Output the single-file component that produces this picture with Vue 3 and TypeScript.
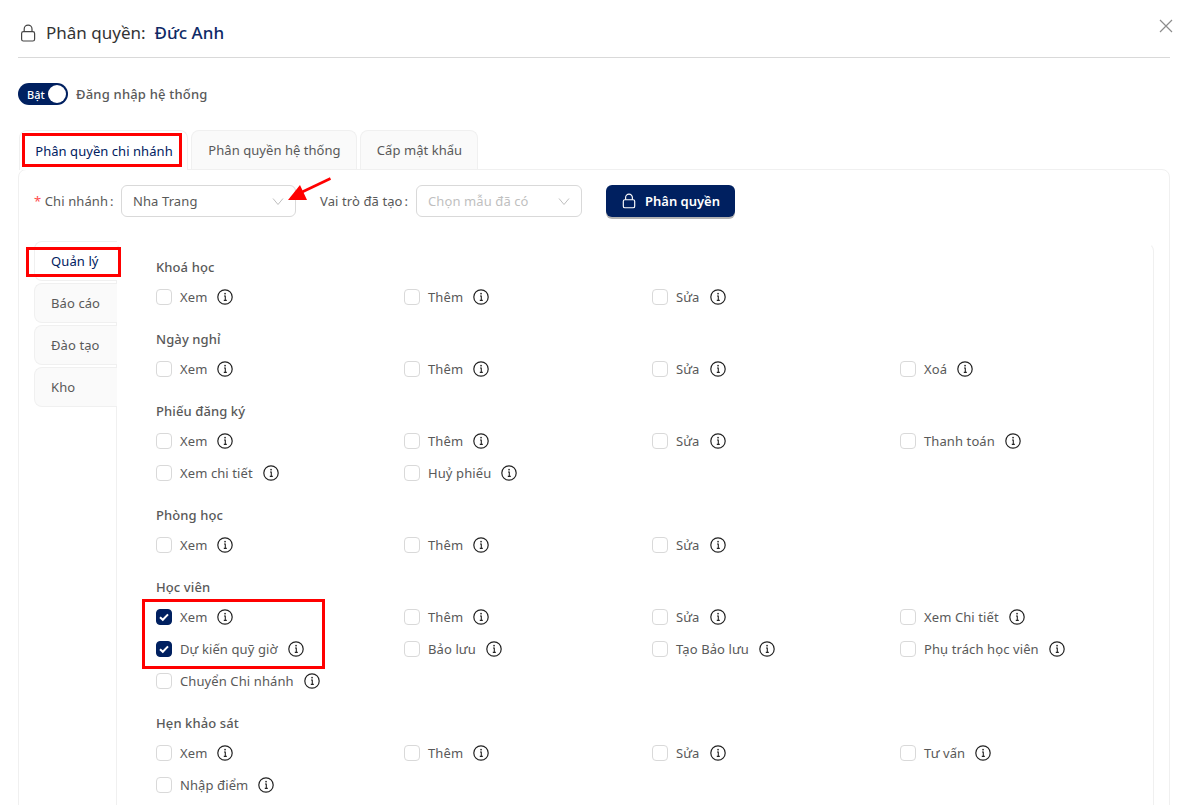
<script setup lang="ts">
interface Group { title: string; items: { label: string; checked?: boolean }[] }
const l = (...names: string[]) => names.map((label) => ({ label }))
const groups: Group[] = [
  { title: 'Khoá học', items: l('Xem', 'Thêm', 'Sửa') },
  { title: 'Ngày nghỉ', items: l('Xem', 'Thêm', 'Sửa', 'Xoá') },
  { title: 'Phiếu đăng ký', items: l('Xem', 'Thêm', 'Sửa', 'Thanh toán', 'Xem chi tiết', 'Huỷ phiếu') },
  { title: 'Phòng học', items: l('Xem', 'Thêm', 'Sửa') },
  {
    title: 'Học viên',
    items: [
      { label: 'Xem', checked: true },
      { label: 'Thêm' },
      { label: 'Sửa' },
      { label: 'Xem Chi tiết' },
      { label: 'Dự kiến quỹ giờ', checked: true },
      { label: 'Bảo lưu' },
      { label: 'Tạo Bảo lưu' },
      { label: 'Phụ trách học viên' },
      { label: 'Chuyển Chi nhánh' },
    ],
  },
  { title: 'Hẹn khảo sát', items: l('Xem', 'Thêm', 'Sửa', 'Tư vấn', 'Nhập điểm') },
]
const sideTabs = ['Quản lý', 'Báo cáo', 'Đào tạo', 'Kho']
</script>

<template>
  <div class="modal">
    <header class="head">
      <svg class="lock" width="18" height="18" viewBox="0 0 18 18" fill="none" stroke="#444" stroke-width="1.2">
        <rect x="2.6" y="7.6" width="13" height="9.4" rx="1.8" />
        <path d="M5.2 7.6V5a3.9 3.9 0 0 1 7.8 0v2.6" />
      </svg>
      <span class="head-label">Phân quyền:</span>
      <span class="head-name">Đức Anh</span>
      <svg class="close" width="14" height="14" viewBox="0 0 14 14" stroke="#8c8c8c" stroke-width="1.2">
        <path d="M1 1l12 12M13 1L1 13" />
      </svg>
    </header>

    <div class="login">
      <span class="toggle"><span class="toggle-text">Bật</span><span class="knob"></span></span>
      <span class="login-label">Đăng nhập hệ thống</span>
    </div>

    <nav class="tabs">
      <span class="tab active">Phân quyền chi nhánh</span>
      <span class="tab">Phân quyền hệ thống</span>
      <span class="tab">Cấp mật khẩu</span>
    </nav>

    <section class="panel">
      <div class="filters">
        <label class="f-label f-first"><span class="req">*</span> Chi nhánh<span class="colon">:</span></label>
        <div class="select s1">
          <span>Nha Trang</span>
          <svg width="12" height="12" viewBox="0 0 12 12" fill="none" stroke="#bfbfbf" stroke-width="1"><path d="M1 3.5l5 6 5-6" /></svg>
        </div>
        <label class="f-label f-second">Vai trò đã tạo<span class="colon">:</span></label>
        <div class="select s2">
          <span class="ph">Chọn mẫu đã có</span>
          <svg width="12" height="12" viewBox="0 0 12 12" fill="none" stroke="#bfbfbf" stroke-width="1"><path d="M1 3.5l5 6 5-6" /></svg>
        </div>
        <button class="btn" type="button">
          <svg width="16" height="16" viewBox="0 0 18 18" fill="none" stroke="#fff" stroke-width="1.3">
            <rect x="2.6" y="7.6" width="12.8" height="9" rx="1.8" />
            <path d="M5.2 7.6V5a3.8 3.8 0 0 1 7.6 0v2.6" />
          </svg>
          Phân quyền
        </button>
      </div>

      <div class="body">
        <aside class="side">
          <span v-for="(t, i) in sideTabs" :key="t" class="side-tab" :class="{ active: i === 0 }">{{ t }}</span>
        </aside>
        <div class="content">
          <div v-for="g in groups" :key="g.title" class="group">
            <div class="g-title">{{ g.title }}</div>
            <div class="grid">
              <div v-for="it in g.items" :key="it.label" class="item">
                <span class="check" :class="{ on: it.checked }">
                  <svg v-if="it.checked" width="12" height="12" viewBox="0 0 12 12" fill="none" stroke="#fff" stroke-width="2"><path d="M2 6.2l2.8 2.6L10 3.4" /></svg>
                </span>
                <span class="item-label">{{ it.label }}</span>
                <svg class="info" width="16" height="16" viewBox="0 0 16 16" fill="none">
                  <circle cx="8" cy="8" r="7.2" stroke="#222" stroke-width="1.2" />
                  <rect x="7.3" y="3.9" width="1.5" height="1.5" fill="#222" />
                  <path d="M7 7h1.3v4.4M6.8 11.4h3" stroke="#222" stroke-width="1.1" />
                </svg>
              </div>
            </div>
          </div>
        </div>
      </div>
    </section>

    <i class="mark m1"></i>
    <i class="mark m2"></i>
    <i class="mark m3"></i>
    <svg class="arrow" width="50" height="30" viewBox="0 0 50 30">
      <path d="M44.5 2.5L14 17" stroke="#f00" stroke-width="2.6" fill="none" />
      <path d="M2 24L14 9l7 15z" fill="#f00" />
    </svg>
  </div>
</template>

<style>
html, body { margin: 0; background: #fff; overflow: hidden; }
</style>

<style scoped>
.modal {
  position: relative;
  width: 1186px;
  height: 805px;
  box-sizing: border-box;
  padding: 0 16px 0 18px;
  overflow: hidden;
  font-family: "Noto Sans", "Open Sans", sans-serif;
  font-size: 13px;
  letter-spacing: 0.1px;
  color: #595959;
}
.head {
  display: flex;
  align-items: center;
  height: 49px;
  padding-top: 8px;
  border-bottom: 1px solid #d9d9d9;
  position: relative;
}
.lock { margin-right: 9px; margin-left: 1px; }
.head-label { font-size: 17px; letter-spacing: 0; color: #333; margin-right: 9px; }
.head-name { font-size: 17px; letter-spacing: 0; color: #0f2a66; font-weight: 500; }
.close { position: absolute; right: -3px; top: 19px; }
.login { display: flex; align-items: center; gap: 8px; margin-top: 25px; height: 22px; }
.toggle {
  width: 50px; height: 22px; border-radius: 11px; background: #002060;
  display: flex; align-items: center; justify-content: space-between; padding: 0 2px 0 9px; box-sizing: border-box;
}
.toggle-text { color: #fff; font-size: 11px; letter-spacing: 0; font-weight: 500; }
.knob { width: 18px; height: 18px; border-radius: 50%; background: #fff; }
.login-label { font-weight: 500; letter-spacing: 0.2px; }
.tabs { display: flex; gap: 3px; margin-top: 25px; padding-left: 1px; height: 39px; }
.tab {
  display: flex; align-items: center; justify-content: center; white-space: nowrap; letter-spacing: 0.05px;
  border: 1px solid #f0f0f0; border-bottom: 0; border-radius: 8px 8px 0 0; background: #fafafa;
  box-sizing: border-box; width: 166px; padding-left: 1px;
}
.tab:nth-child(1) { width: 169px; }
.tab:nth-child(3) { width: 118px; }
.tab.active { background: #fff; color: #002060; position: relative; z-index: 1; height: 40px; }
.panel {
  border: 1px solid #f0f0f0; border-radius: 8px 8px 0 0;
  height: 700px; box-sizing: border-box; padding: 15px 15px 0 15px;
}
.filters { display: flex; align-items: flex-start; height: 33px; }
.f-label { white-space: nowrap; line-height: 32px; }
.colon { margin-left: 2px; margin-right: 5px; }
.req { color: #ff4d4f; }
.f-first { width: 87px; }
.f-second { width: 96px; margin-left: 24px; }
.select {
  display: flex; align-items: center; justify-content: space-between;
  height: 32px; box-sizing: border-box; border: 1px solid #d9d9d9; border-radius: 6px; padding: 0 11px;
  color: #595959;
}
.s1 { width: 175px; }
.s2 { width: 166px; }
.ph { color: #bfbfbf; }
.btn {
  display: flex; align-items: center; justify-content: center; gap: 8px; padding: 0;
  margin-left: 24px; width: 129px; height: 32px; border: 0; border-radius: 6px; background: #002060;
  color: #fff; font: 600 13px "Noto Sans", sans-serif; box-shadow: 0 2px 0 rgba(0,0,0,.3);
}
.body { display: flex; margin-top: 23px; }
.side { width: 83px; display: flex; flex-direction: column; gap: 2px; flex: none; position: relative; z-index: 1; }
.side-tab {
  height: 40px; box-sizing: border-box; display: flex; align-items: center; padding-left: 16px;
  border: 1px solid #f0f0f0; border-right: 0; border-radius: 8px 0 0 8px; background: #fafafa;
}
.side-tab.active { background: #fff; color: #002060; }
.content {
  flex: 1; min-width: 0; border: 1px solid #f0f0f0; border-top-color: transparent; border-bottom: 0;
  margin-top: 2px; margin-left: -1px; padding: 12px 0 0 39px;
  border-radius: 8px 8px 0 0;
}
.group { margin-bottom: 15px; }
.g-title { font-weight: 500; line-height: 22px; margin-bottom: 3px; }
.grid { display: grid; grid-template-columns: repeat(4, 248px); }
.item { display: flex; align-items: center; height: 32px; }
.check {
  width: 16px; height: 16px; box-sizing: border-box; border: 1px solid #d9d9d9; border-radius: 4px;
  display: flex; align-items: center; justify-content: center; margin-right: 8px; background: #fff;
}
.check.on { background: #002060; border-color: #002060; }
.item-label { margin-right: 10px; }
.info { flex: none; }
.mark { position: absolute; border: 3px solid #f00; box-sizing: border-box; z-index: 2; }
.m1 { left: 22px; top: 133px; width: 160px; height: 34px; }
.m2 { left: 26px; top: 247px; width: 95px; height: 30px; }
.m3 { left: 142px; top: 599px; width: 183px; height: 70px; }
.arrow { position: absolute; left: 286px; top: 176px; z-index: 2; }
</style>
